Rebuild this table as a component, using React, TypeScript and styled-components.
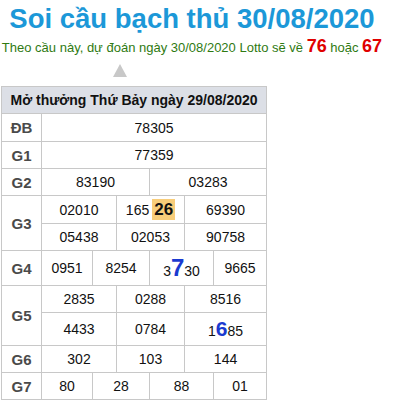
import React from "react";
import styled, { createGlobalStyle } from "styled-components";

const Global = createGlobalStyle`
  html, body { margin: 0; padding: 0; background: #fff; }
  body { font-family: "Liberation Sans", Arial, sans-serif; }
`;

const Page = styled.div`
  width: 395px;
`;

const Head = styled.div`
  width: 384px;
  text-align: center;
`;

const Title = styled.h1`
  margin: 0;
  font-size: 27.5px;
  line-height: 38px;
  font-weight: bold;
  color: #1c98d8;
`;

const Sub = styled.div`
  font-size: 13px;
  line-height: 16px;
  color: #2f7a12;
  white-space: nowrap;
`;

const Hot = styled.b`
  color: #e00000;
  font-size: 18px;
  line-height: 16px;
`;

const Arrow = styled.div`
  width: 0;
  height: 0;
  margin: 8px 0 9px 113px;
  border-left: 7.5px solid transparent;
  border-right: 7.5px solid transparent;
  border-bottom: 13px solid #c8c8c8;
`;

const Table = styled.table`
  margin-left: 1px;
  width: 266px;
  border-collapse: collapse;
  table-layout: fixed;
  font-size: 14px;
  color: #111;
`;

const HeadCell = styled.th`
  background: #dcdfe6;
  border: 1px solid #c8c8c8;
  font-size: 14px;
  font-weight: bold;
  height: 26px;
  padding: 0;
  text-align: center;
  color: #111;
  white-space: nowrap;
`;

const Label = styled.td`
  border: 1px solid #c8c8c8;
  font-weight: bold;
  color: #4a4a4a;
  text-align: center;
  font-size: 15px;
  padding: 0;
`;

const Cell = styled.td<{ $h?: number }>`
  border: 1px solid #c8c8c8;
  text-align: center;
  padding: 0;
  height: ${(p) => p.$h ?? 26}px;
  font-size: 14px;
  color: #111;
`;

const Mark = styled.span`
  display: inline-block;
  background: #f8cd7a;
  font-weight: bold;
  font-size: 17px;
  line-height: 21px;
  padding: 0 2px;
  margin-left: 3px;
  color: #111;
`;

const Big = styled.b<{ $size: number }>`
  color: #1a3ad0;
  font-size: ${(p) => p.$size}px;
  line-height: 20px;
`;

const cols = [40, 51, 24, 33, 35, 29, 53];

export default function App() {
  return (
    <Page>
      <Global />
      <Head>
        <Title>Soi cầu bạch thủ 30/08/2020</Title>
        <Sub>
          Theo cầu này, dự đoán ngày 30/08/2020 Lotto sẽ về <Hot>76</Hot> hoặc <Hot>67</Hot>
        </Sub>
      </Head>
      <Arrow />
      <Table>
        <colgroup>
          {cols.map((w, i) => (
            <col key={i} style={{ width: w }} />
          ))}
        </colgroup>
        <thead>
          <tr>
            <HeadCell colSpan={7}>Mở thưởng Thứ Bảy ngày 29/08/2020</HeadCell>
          </tr>
        </thead>
        <tbody>
          <tr>
            <Label>ĐB</Label>
            <Cell colSpan={6} $h={27}>78305</Cell>
          </tr>
          <tr>
            <Label>G1</Label>
            <Cell colSpan={6}>77359</Cell>
          </tr>
          <tr>
            <Label>G2</Label>
            <Cell colSpan={3}>83190</Cell>
            <Cell colSpan={3}>03283</Cell>
          </tr>
          <tr>
            <Label rowSpan={2}>G3</Label>
            <Cell colSpan={2} $h={27}>02010</Cell>
            <Cell colSpan={2} $h={27}>
              165<Mark>26</Mark>
            </Cell>
            <Cell colSpan={2} $h={27}>69390</Cell>
          </tr>
          <tr>
            <Cell colSpan={2} $h={26}>05438</Cell>
            <Cell colSpan={2} $h={26}>02053</Cell>
            <Cell colSpan={2} $h={26}>90758</Cell>
          </tr>
          <tr>
            <Label>G4</Label>
            <Cell $h={34}>0951</Cell>
            <Cell colSpan={2} $h={34}>8254</Cell>
            <Cell colSpan={2} $h={34}>
              3<Big $size={24}>7</Big>30
            </Cell>
            <Cell $h={34}>9665</Cell>
          </tr>
          <tr>
            <Label rowSpan={2}>G5</Label>
            <Cell colSpan={2}>2835</Cell>
            <Cell colSpan={2}>0288</Cell>
            <Cell colSpan={2}>8516</Cell>
          </tr>
          <tr>
            <Cell colSpan={2} $h={32}>4433</Cell>
            <Cell colSpan={2} $h={32}>0784</Cell>
            <Cell colSpan={2} $h={32}>
              1<Big $size={21}>6</Big>85
            </Cell>
          </tr>
          <tr>
            <Label>G6</Label>
            <Cell colSpan={2}>302</Cell>
            <Cell colSpan={2}>103</Cell>
            <Cell colSpan={2}>144</Cell>
          </tr>
          <tr>
            <Label>G7</Label>
            <Cell>80</Cell>
            <Cell colSpan={2}>28</Cell>
            <Cell colSpan={2}>88</Cell>
            <Cell>01</Cell>
          </tr>
        </tbody>
      </Table>
    </Page>
  );
}
